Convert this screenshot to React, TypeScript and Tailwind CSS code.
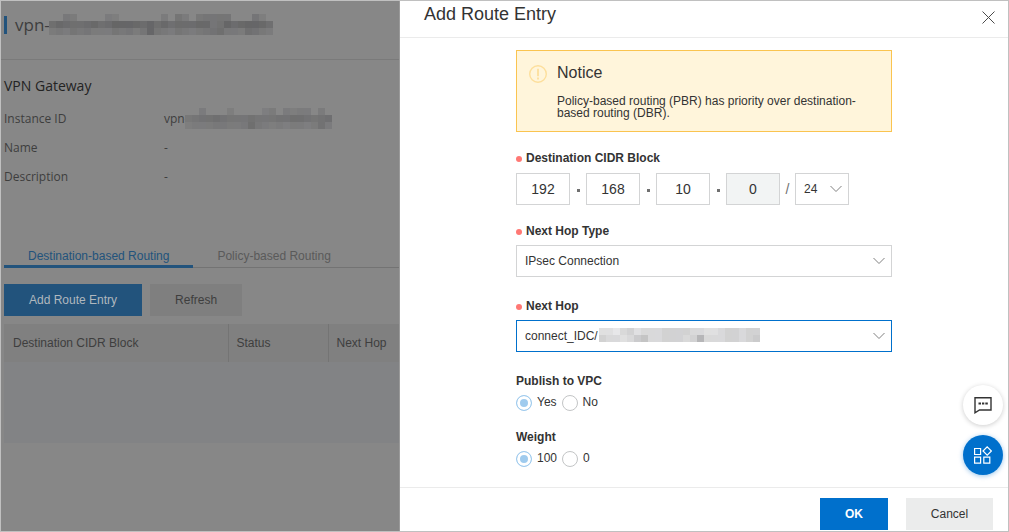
import { clsx } from 'clsx';

const details = [
  { label: 'Instance ID', value: 'vpn-', masked: true },
  { label: 'Name', value: '-', masked: false },
  { label: 'Description', value: '-', masked: false },
];

// one row of cells per string, shades 0-9 and a-f from dark to light, "." is empty
const titleMask = [
  '..ab....bc......b.9b.a9999...9c.',
  '75677657644456475766655984654457',
  'bab9a9bbb9a9b949ab9aba987aab78ab',
];
const idMask = [
  '..b...c....cb.bcbb.b.',
  'a98878999899988778987',
  'cbbbaabba7abcbcbbcb8b',
];
const hopMask = [
  'eefdcedddccccddeedccdcc',
  'cddedbaddcccdc8dddccdcb',
];

function Mask({ rows, dark }: { rows: string[]; dark?: boolean }) {
  const cell = 7;
  return (
    <svg
      width={rows[0].length * cell}
      height={rows.length * cell}
      className="shrink-0"
      aria-hidden="true"
      shapeRendering="crispEdges"
    >
      {rows.map((row, y) =>
        row.split('').map((shade, x) => {
          if (shade === '.') return null;
          const level = parseInt(shade, 16);
          const value = dark ? 90 + level * 3 : 126 + level * 7;
          return (
            <rect
              key={`${x}-${y}`}
              x={x * cell}
              y={y * cell}
              width={cell}
              height={cell}
              fill={`rgb(${value},${value},${value + (x % 3)})`}
            />
          );
        })
      )}
    </svg>
  );
}

function Chevron() {
  return (
    <svg
      viewBox="0 0 12 8"
      className="pointer-events-none absolute right-[7px] top-3 h-2 w-3"
      fill="none"
      stroke="#808080"
      strokeWidth="1"
      aria-hidden="true"
    >
      <path d="M0.5 1L6 6.5L11.5 1" />
    </svg>
  );
}

function FieldLabel({ htmlFor, children }: { htmlFor: string; children: string }) {
  return (
    <label htmlFor={htmlFor} className="flex h-4 items-center gap-1 font-bold">
      <span className="mt-0.5 h-1.5 w-1.5 rounded-full bg-[#ff7874]" />
      {children}
    </label>
  );
}

function RadioRow({ name, legend, options }: { name: string; legend: string; options: string[] }) {
  return (
    <fieldset>
      <legend className="h-4 font-bold leading-4">{legend}</legend>
      <div className="mt-[5px] flex h-4 gap-[5px]">
        {options.map((option, index) => (
          <label key={option} className="flex items-center gap-[5px]">
            <input
              type="radio"
              name={name}
              defaultChecked={index === 0}
              className="mt-0.5 h-4 w-4 shrink-0 appearance-none rounded-full border border-[#c3c5c6] bg-white checked:border-[#9fcbee] checked:bg-[#9fcbee] checked:shadow-[inset_0_0_0_3px_white]"
            />
            {option}
          </label>
        ))}
      </div>
    </fieldset>
  );
}

function GatewayPage() {
  return (
    <main className="min-w-0 flex-1 overflow-hidden border-r border-[#9a9a9a] bg-[#878787] text-xs text-[#3e3e3e]">
      <header className="flex h-[59px] items-start border-b border-[#7a7a7a] pl-[3px] pt-[13px] font-['Open_Sans','Noto_Sans',sans-serif]">
        <span className="mt-0.5 h-[18px] w-[3px] bg-[#22537c]" />
        <h1 className="ml-2 w-[34px] whitespace-nowrap text-[17px] leading-[22px]">vpn-</h1>
        <Mask rows={titleMask} dark />
      </header>

      <section className="pl-[3px] pt-4 font-['Open_Sans','Noto_Sans',sans-serif]">
        <h2 className="text-sm font-medium leading-5 text-[#232323]">VPN Gateway</h2>
        <dl className="mt-2">
          {details.map((item) => (
            <div key={item.label} className="flex h-[29px] items-center">
              <dt className="w-40 shrink-0">{item.label}</dt>
              <dd className="flex items-center">
                <span className={clsx(item.masked && 'w-[21px]')}>{item.value}</span>
                {item.masked && <Mask rows={idMask} dark />}
              </dd>
            </div>
          ))}
        </dl>
      </section>

      <div className="pl-[3px] pt-[53px]">
        <div role="tablist" className="flex h-6 whitespace-nowrap border-b border-[#737373]">
          <button role="tab" aria-selected="true" className="-mb-px border-b-3 border-[#22537c] px-6 pt-0.5 text-[#22537c]">
            Destination-based Routing
          </button>
          <button role="tab" aria-selected="false" className="border-b-2 border-transparent px-6 pt-0.5 text-[#5a5a5a]">
            Policy-based Routing
          </button>
        </div>

        <div className="mt-4 flex gap-2">
          <button className="h-8 bg-[#22537c] px-[25px] text-[#b0b8be]">Add Route Entry</button>
          <button className="h-8 bg-[#7f7f7f] px-[25px]">Refresh</button>
        </div>

        <table className="mt-2 w-full table-fixed border-collapse text-left">
          <thead className="bg-[#808080]">
            <tr className="h-[38px]">
              <th className="w-56 border-r border-[#747474] px-[9px] font-normal">Destination CIDR Block</th>
              <th className="w-[100px] border-r border-[#747474] px-2 font-normal">Status</th>
              <th className="px-2 font-normal">Next Hop</th>
            </tr>
          </thead>
          <tbody>
            <tr className="h-[81px] bg-[#828385]">
              <td colSpan={3} />
            </tr>
          </tbody>
        </table>
      </div>
    </main>
  );
}

function RouteDrawer() {
  return (
    <div role="dialog" aria-labelledby="drawer-title" className="relative flex w-[608px] shrink-0 flex-col bg-white">
      <header className="flex h-[37px] items-start justify-between border-b border-[#ebebeb] pl-6 pr-[13px]">
        <h2 id="drawer-title" className="pt-px text-lg leading-6">Add Route Entry</h2>
        <button aria-label="Close" className="mt-2.5">
          <svg width="13" height="13" viewBox="0 0 13 13" stroke="#4b4b4b" strokeWidth="1">
            <path d="M0.5 0.5L12.5 12.5M12.5 0.5L0.5 12.5" />
          </svg>
        </button>
      </header>

      <form className="ml-[116px] mt-3 w-[376px] flex-1 text-xs">
        <div role="note" className="flex h-[82px] gap-2.5 border border-[#fac450] bg-[#fff5db] pl-3 pt-3">
          <svg width="18" height="18" viewBox="0 0 18 18" fill="none" stroke="#fddf9c" className="mt-0.5 shrink-0" aria-hidden="true">
            <circle cx="9" cy="9" r="8.3" strokeWidth="1.4" />
            <path d="M9 3.8V11.2M9 12.5V14.5" strokeWidth="1.8" />
          </svg>
          <div>
            <h3 className="text-base leading-5">Notice</h3>
            <p className="mt-3 w-[310px] leading-3">
              Policy-based routing (PBR) has priority over destination-based routing (DBR).
            </p>
          </div>
        </div>

        <div className="mt-[18px]">
          <FieldLabel htmlFor="cidr-0">Destination CIDR Block</FieldLabel>
          <div className="mt-[7px] flex h-8 items-center text-sm">
            {['192', '168', '10', '0'].map((octet, index) => (
              <div key={index} className="flex items-center">
                <input
                  id={`cidr-${index}`}
                  aria-label={`Octet ${index + 1}`}
                  defaultValue={octet}
                  disabled={index === 3}
                  className="h-8 w-[54px] border border-[#d3d4d5] text-center disabled:bg-[#f2f4f4]"
                />
                {index < 3 && (
                  <span className="flex w-4 justify-center pt-0.5">
                    <span className="h-[3px] w-[3px] bg-[#707070]" />
                  </span>
                )}
              </div>
            ))}
            <span className="w-[15px] text-center text-[#707070]">/</span>
            <div className="relative">
              <select aria-label="Prefix length" className="block h-8 w-[54px] appearance-none border border-[#d3d4d5] pl-2 text-xs">
                <option>24</option>
              </select>
              <Chevron />
            </div>
          </div>
        </div>

        <div className="mt-[18px]">
          <FieldLabel htmlFor="hop-type">Next Hop Type</FieldLabel>
          <div className="relative mt-1.5">
            <select id="hop-type" className="block h-8 w-full appearance-none border border-[#d3d4d5] pl-2">
              <option>IPsec Connection</option>
            </select>
            <Chevron />
          </div>
        </div>

        <div className="mt-[21px]">
          <FieldLabel htmlFor="next-hop">Next Hop</FieldLabel>
          <div className="relative mt-1.5">
            <select id="next-hop" className="block h-8 w-full appearance-none border border-[#0070cc] pl-2">
              <option>connect_IDC/</option>
            </select>
            <div className="pointer-events-none absolute left-[83px] top-2">
              <Mask rows={hopMask} />
            </div>
            <Chevron />
          </div>
        </div>

        <div className="mt-[21px] flex flex-col gap-[19px]">
          <RadioRow name="publish" legend="Publish to VPC" options={['Yes', 'No']} />
          <RadioRow name="weight" legend="Weight" options={['100', '0']} />
        </div>
      </form>

      <footer className="mt-4 flex h-11 items-start justify-end gap-[18px] border-t border-[#ebebeb] pr-[15px] pt-2.5 text-xs">
        <button className="h-8 w-[68px] bg-[#0070cc] font-bold text-white">OK</button>
        <button className="h-8 w-[87px] bg-[#ebecec]">Cancel</button>
      </footer>

      <div className="absolute bottom-14 right-[5px] flex flex-col gap-2.5">
        <button aria-label="Feedback" className="flex h-10 w-10 items-center justify-center rounded-full bg-white shadow-[0_1px_5px_rgba(0,0,0,0.2)]">
          <svg width="18" height="18" viewBox="0 0 18 18" fill="none" stroke="#333" strokeWidth="1.4" aria-hidden="true">
            <path d="M1 1.7H17V14H5.5L1 16.8Z" />
            <path d="M4.5 7.5H7M8 7.5H10.3M11.3 7.5H13.8" strokeWidth="2" />
          </svg>
        </button>
        <button aria-label="Apps" className="flex h-10 w-10 items-center justify-center rounded-full bg-[#0070cc] shadow-[0_1px_5px_rgba(0,112,204,0.4)]">
          <svg width="18" height="18" viewBox="0 0 18 18" fill="none" stroke="#fff" strokeWidth="1.2" aria-hidden="true">
            <path d="M0.6 2.5H6.6V8.5H0.6ZM0.6 11.2H6.6V17.2H0.6ZM9.8 11.2H15.8V17.2H9.8ZM13.2 0.8L17.4 5L13.2 9.2L9 5Z" />
          </svg>
        </button>
      </div>
    </div>
  );
}

export default function App() {
  return (
    <div className="flex min-h-screen border border-[#c0c0c0] font-['Liberation_Sans',Arial,sans-serif] text-[#333]">
      <GatewayPage />
      <RouteDrawer />
    </div>
  );
}
